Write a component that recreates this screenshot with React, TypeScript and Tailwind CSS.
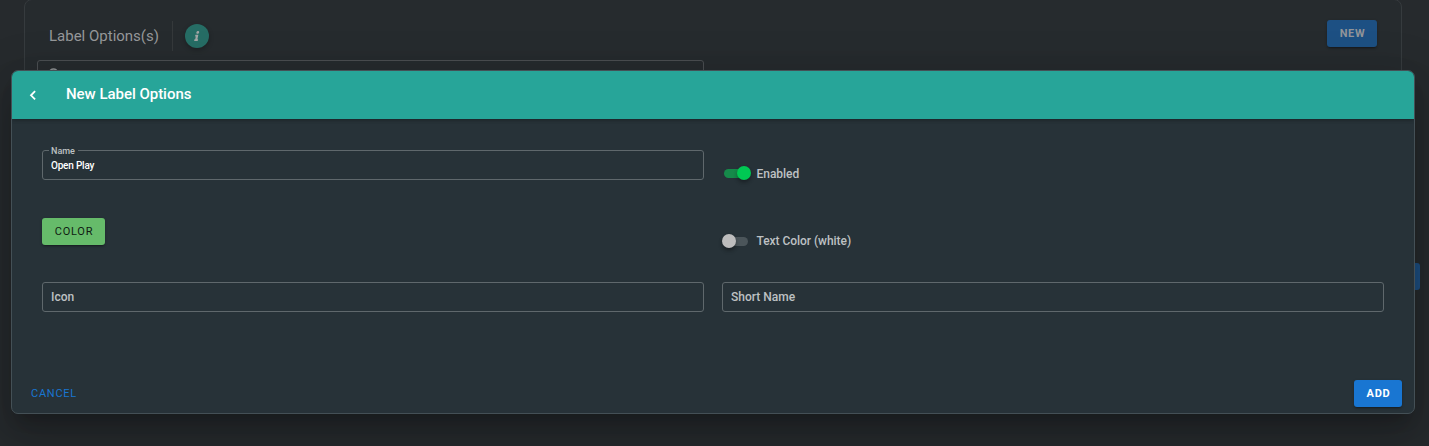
import type { ReactNode } from 'react';
import { FaInfo } from 'react-icons/fa';

function Toggle({ on, label }: { on: boolean; label: string }) {
  return (
    <div role="switch" aria-checked={on} className="flex h-[22px] items-center">
      <span className={`relative h-[9px] rounded-full ${on ? 'ml-[2px] w-[25px] bg-[#168a4a]' : 'ml-[1px] w-[25px] bg-[#4b555a]'}`}>
        <span
          className={`absolute size-[14px] rounded-full shadow-[0_2px_4px_-1px_rgba(0,0,0,.3),0_3px_4px_rgba(0,0,0,.18)] ${
            on ? '-top-[2.5px] -right-[2px] bg-[#00c853]' : '-top-[2.5px] -left-[1px] bg-[#bdbdbd]'
          }`}
        />
      </span>
      <span className={`text-[12px] leading-[16px] font-medium text-[#bec1c3] ${on ? 'ml-[7.5px] pt-px tracking-[-0.04px]' : 'ml-[8.5px] tracking-[-0.04px]'}`}>{label}</span>
    </div>
  );
}

function Field({ label, value }: { label: string; value?: string }) {
  return (
    <div className="relative flex h-[30px] w-[662px] items-center rounded-[3px] border border-[#5f686c] px-2">
      {value ? (
        <>
          <span className="absolute -top-[7px] left-[6px] bg-[#273238] pr-[3px] pl-[2px] text-[9px] leading-[14px] font-medium text-[#bec1c3]">{label}</span>
          <span className="pt-[2px] text-[10px] leading-[14px] font-medium tracking-[-0.2px] text-white">{value}</span>
        </>
      ) : (
        <span className="text-[12px] leading-[16px] font-medium text-[#bec1c3]">{label}</span>
      )}
    </div>
  );
}

function Button({ className, children }: { className: string; children: ReactNode }) {
  return (
    <button
      className={`flex h-[27px] items-center justify-center rounded-[3px] pl-px text-[11px] leading-none shadow-[0_2px_2px_-1px_rgba(0,0,0,.3),0_1px_3px_rgba(0,0,0,.2)] ${className}`}
    >
      {children}
    </button>
  );
}

function OptionsPage() {
  return (
    <div className="flex h-[446px]">
      <section className="-mt-px ml-[24px] h-[400px] w-[1378px] shrink-0 rounded-[8px] border border-[#363b3e] bg-[#262b2e]">
        <div className="flex h-[60px] items-center pt-[12px] pr-6 pl-[24px]">
          <h2 className="w-[111px] text-[15px] leading-[20px] whitespace-nowrap text-[#96989a]">Label Options(s)</h2>
          <span className="ml-[12px] h-[30px] w-px bg-[#35393b]" />
          <span className="ml-[12px] flex size-[24px] items-center justify-center rounded-full bg-[#266d65] pb-px text-[#a3a5a5] shadow-[0_2px_5px_rgba(0,0,0,.25)]">
            <FaInfo className="size-[10px] -skew-x-12" aria-label="Information" />
          </span>
          <Button className="mt-[-5px] ml-auto w-[50px] bg-[#1d5083] font-bold tracking-[0.7px] text-[#929599]">NEW</Button>
        </div>
        <div className="ml-[12px] h-[40px] w-[667px] rounded-[3px] border border-[#4b4f52] px-[11px] pt-[7px]">
          <svg viewBox="0 0 12 12" className="size-[12px]" fill="none" stroke="#909395" strokeWidth="1.5" aria-label="Search">
            <circle cx="4.5" cy="4.9" r="4" />
            <path d="m7.6 7.6 3.4 3.6" />
          </svg>
        </div>
      </section>
      <div className="mt-[263px] -ml-[12px] h-[27px] w-[30px] shrink-0 rounded-[3px] bg-[#1d4f81]" />
    </div>
  );
}

export default function App() {
  return (
    <div className="relative h-[446px] w-full overflow-hidden bg-[#262a2d] font-[Roboto,sans-serif]">
      <OptionsPage />
      <div
        role="dialog"
        className="absolute top-[70px] left-[11px] flex h-[344px] w-[1404px] flex-col overflow-hidden rounded-[7px] border border-[#445056] bg-[#273238] shadow-[0_11px_15px_-7px_rgba(0,0,0,.2),0_24px_38px_3px_rgba(0,0,0,.14),0_9px_46px_8px_rgba(0,0,0,.12)]"
      >
        <header className="relative flex h-[48px] shrink-0 items-center bg-[#27a599] pl-[15px] text-white shadow-[0_2px_4px_-1px_rgba(0,0,0,.2),0_1px_4px_rgba(0,0,0,.14)]">
          <svg viewBox="0 0 12 12" className="size-[12px]" fill="none" stroke="currentColor" strokeWidth="1.8" aria-label="Back">
            <path d="M8.1 2.2 4 6.3l4.1 4.1" />
          </svg>
          <h1 className="ml-[27px] pb-[3px] text-[15px] leading-[20px] font-medium tracking-[-0.03px]">New Label Options</h1>
        </header>
        <div className="grid grid-cols-[662px_662px] gap-x-[18px] pt-[31px] pl-[30px]">
          <div className="h-[68px]">
            <Field label="Name" value="Open Play" />
          </div>
          <div className="pt-[12px]">
            <Toggle on label="Enabled" />
          </div>
          <div className="h-[64px]">
            <Button className="w-[63px] bg-[#66bb6a] tracking-[0.8px] text-[#101c12]">COLOR</Button>
          </div>
          <div className="pt-[12px]">
            <Toggle on={false} label="Text Color (white)" />
          </div>
          <Field label="Icon" />
          <Field label="Short Name" />
        </div>
        <footer className="mt-auto flex items-center justify-between pr-[12px] pb-[6px] pl-[19px]">
          <button className="text-[11px] leading-[16px] tracking-[0.75px] text-[#1976d2]">CANCEL</button>
          <Button className="w-[48px] bg-[#1976d2] font-bold tracking-[0.7px] text-white">ADD</Button>
        </footer>
      </div>
    </div>
  );
}
